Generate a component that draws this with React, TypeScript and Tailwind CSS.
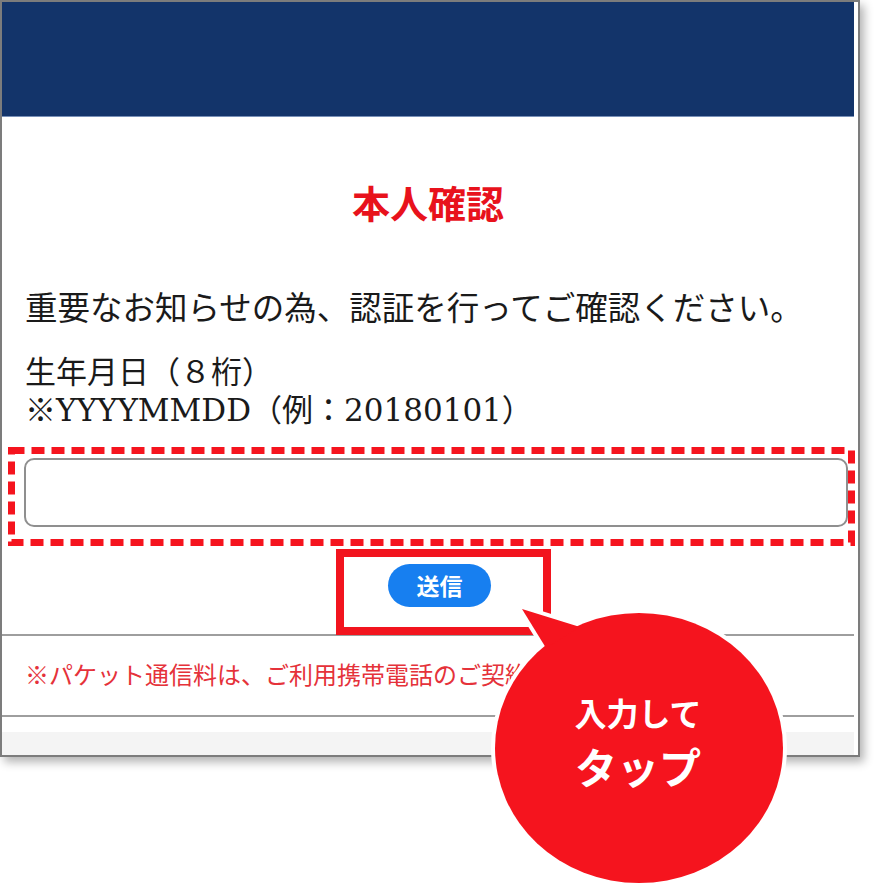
import React from 'react';

const jp = '"Noto Sans CJK JP", "Noto Sans", sans-serif';
const serifJp = '"Liberation Serif", "Noto Sans CJK JP", serif';

function Bubble() {
  return (
    <div className="absolute left-[480px] top-[596px] w-[320px] h-[294px]">
      <svg className="absolute inset-0" width="320" height="294" viewBox="0 0 320 294">
        <g fill="#ffffff" stroke="#ffffff" strokeWidth="8" strokeLinejoin="round">
          <ellipse cx="159" cy="152" rx="144" ry="135" />
          <polygon points="42,13 66,52 100,31" />
        </g>
        <g fill="#f5141e">
          <ellipse cx="159" cy="152" rx="144" ry="135" />
          <polygon points="42,13 66,52 100,31" />
        </g>
      </svg>
      <div
        className="absolute left-[0px] top-[94px] w-[316px] flex flex-col items-center text-white font-bold"
        style={{ fontFamily: jp }}
      >
        <div className="text-[32px] leading-[44px]">入力して</div>
        <div className="text-[42px] leading-[56px] mt-[4px]">タップ</div>
      </div>
    </div>
  );
}

export default function App() {
  return (
    <div className="w-[884px] h-[890px] bg-white relative overflow-hidden">
      <div className="w-[860px] h-[757px] border-2 border-[#7c7c7c] bg-white shadow-[4px_5px_9px_rgba(0,0,0,0.3)] flex">
        <div className="w-[852px] flex flex-col">
          <div className="h-[114px] bg-[#13346a]" />
          <div className="h-px bg-[#7890b8]" />

          <h1
            className="mt-[69px] text-center text-[38px] leading-[38px] font-bold text-[#e8121c]"
            style={{ fontFamily: serifJp }}
          >
            本人確認
          </h1>

          <p
            className="mt-[65px] pl-[23px] text-[32.5px] leading-[40px] text-[#1a1a1a]"
            style={{ fontFamily: serifJp }}
          >
            重要なお知らせの為、認証を行ってご確認ください。
          </p>

          <div
            className="mt-[24px] pl-[23px] text-[31px] leading-[38px] text-[#1a1a1a]"
            style={{ fontFamily: '"DejaVu Serif", "Noto Sans CJK JP", serif' }}
          >
            <div>生年月日（８桁）</div>
            <div>※YYYYMMDD（例：20180101）</div>
          </div>

          <div className="mt-[29px] h-[69px] relative">
            <input
              type="text"
              className="ml-[22px] w-[824px] h-full rounded-[10px] border-2 border-[#8f8f8f] bg-white outline-none"
            />
            <svg
              className="absolute left-[6px] top-[-11px]"
              width="847"
              height="99"
              viewBox="0 0 847 99"
            >
              <rect
                x="3.5"
                y="3.5"
                width="840"
                height="92"
                fill="none"
                stroke="#f5141e"
                strokeWidth="7"
                strokeDasharray="13 7"
              />
            </svg>
          </div>

          <div className="mt-[37px] h-[43px] relative">
            <button
              className="ml-[386px] w-[103px] h-[43px] rounded-full bg-[#177ff0] text-white text-[23px] font-bold leading-none"
              style={{ fontFamily: jp }}
            >
              送信
            </button>
            <div className="absolute left-[334px] top-[-15px] w-[215px] h-[86px] border-[8px] border-[#f2141e]" />
          </div>

          <div className="mt-[27px] h-[2px] bg-[#9e9e9e]" />
          <div
            className="h-[79px] flex items-center pl-[23px] text-[24px] text-[#e5323a] whitespace-nowrap overflow-hidden"
            style={{ fontFamily: serifJp }}
          >
            ※パケット通信料は、ご利用携帯電話のご契約内容に準じます。
          </div>
          <div className="h-[2px] bg-[#9e9e9e]" />
          <div className="h-[15px]" />
          <div className="h-[23px] bg-[#f4f4f4]" />
        </div>
      </div>

      <Bubble />
    </div>
  );
}
